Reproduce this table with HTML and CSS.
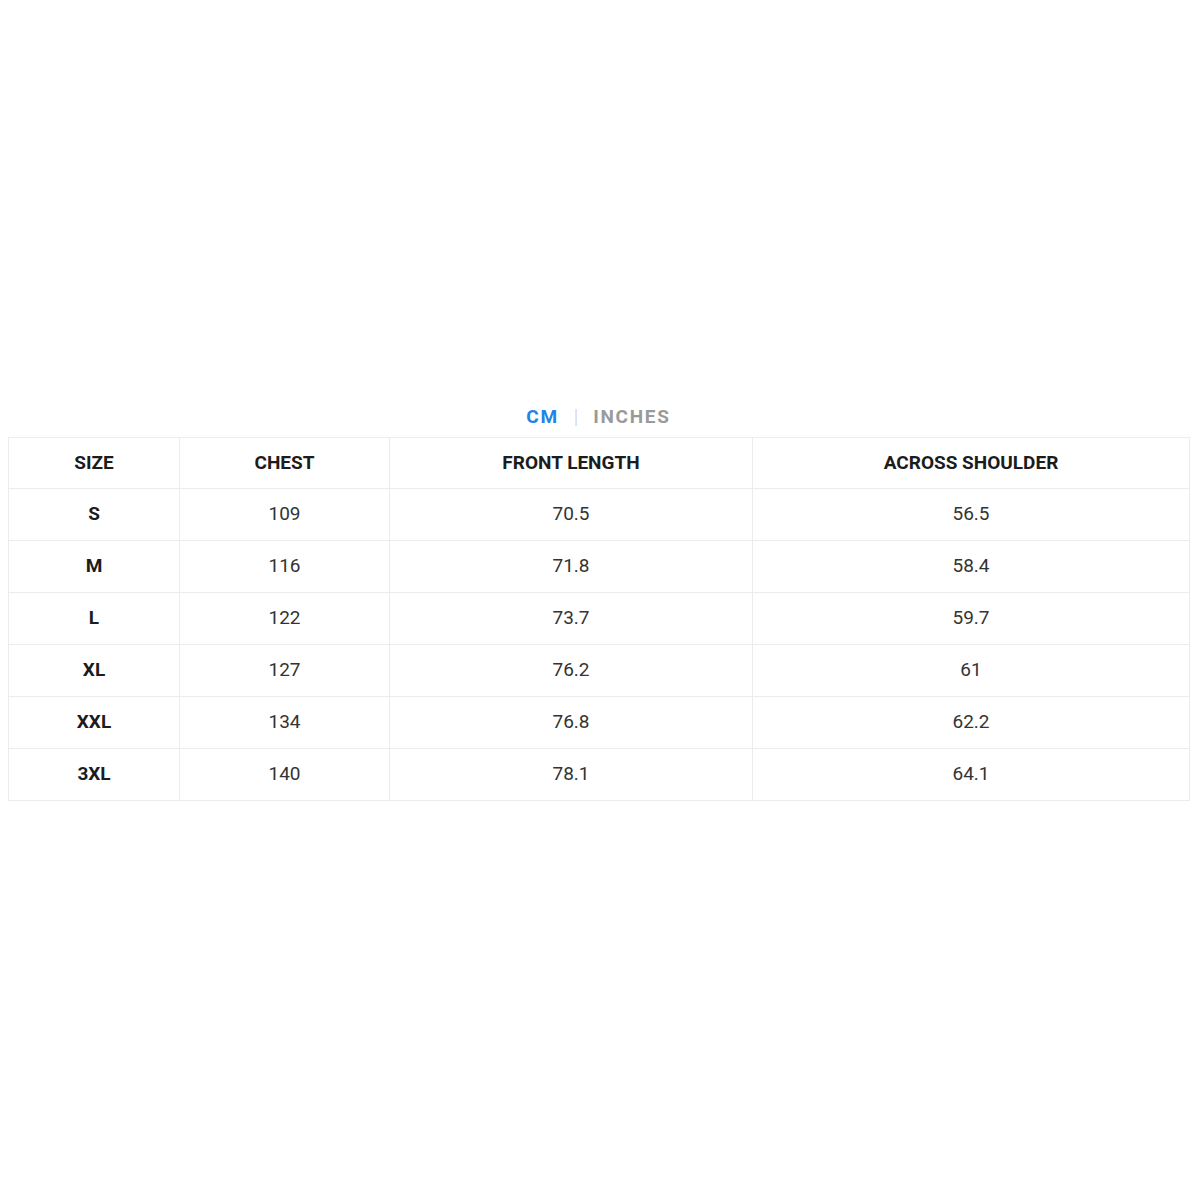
FILE: index.html
```html
<!DOCTYPE html>
<html>
<head>
<meta charset="utf-8">
<link rel="stylesheet" href="styles.css">
</head>
<body>
<main class="page">
  <div class="units">
    <span class="unit active">CM</span>
    <span class="sep">|</span>
    <span class="unit">INCHES</span>
  </div>
  <table class="chart">
    <colgroup>
      <col class="c1"><col class="c2"><col class="c3"><col class="c4">
    </colgroup>
    <thead>
      <tr><th>SIZE</th><th>CHEST</th><th>FRONT LENGTH</th><th>ACROSS SHOULDER</th></tr>
    </thead>
    <tbody>
      <tr><th>S</th><td>109</td><td>70.5</td><td>56.5</td></tr>
      <tr><th>M</th><td>116</td><td>71.8</td><td>58.4</td></tr>
      <tr><th>L</th><td>122</td><td>73.7</td><td>59.7</td></tr>
      <tr><th>XL</th><td>127</td><td>76.2</td><td>61</td></tr>
      <tr><th>XXL</th><td>134</td><td>76.8</td><td>62.2</td></tr>
      <tr><th>3XL</th><td>140</td><td>78.1</td><td>64.1</td></tr>
    </tbody>
  </table>
</main>
</body>
</html>
```
FILE: styles.css
```css
html, body {
  margin: 0;
  padding: 0;
  background: #fff;
}
.page {
  padding: 400px 0 0 8px;
  font-family: Roboto, "Liberation Sans", sans-serif;
}
.units {
  box-sizing: border-box;
  width: 1181px;
  display: flex;
  justify-content: center;
  align-items: center;
  gap: 15px;
  height: 37px;
  padding-bottom: 4px;
  font-size: 19px;
  font-weight: 700;
  letter-spacing: 1.7px;
}
.unit { color: #9a9a9a; }
.unit.active { color: #1f84e6; }
.sep {
  color: #d0d0d0;
  font-weight: 300;
  font-size: 20px;
  letter-spacing: 0;
}
.chart {
  width: 1181px;
  border-collapse: collapse;
  table-layout: fixed;
  font-size: 19px;
  color: #333;
}
.c1 { width: 171px; }
.c2 { width: 210px; }
.c3 { width: 363px; }
.c4 { width: 437px; }
.chart th, .chart td {
  border: 1px solid #ececec;
  height: 49px;
  padding: 0 0 2px;
  text-align: center;
  vertical-align: middle;
}
.chart thead th {
  height: 48px;
}
.chart th {
  font-weight: 700;
  color: #1c1c1c;
}
.chart td {
  font-weight: 400;
}
```
